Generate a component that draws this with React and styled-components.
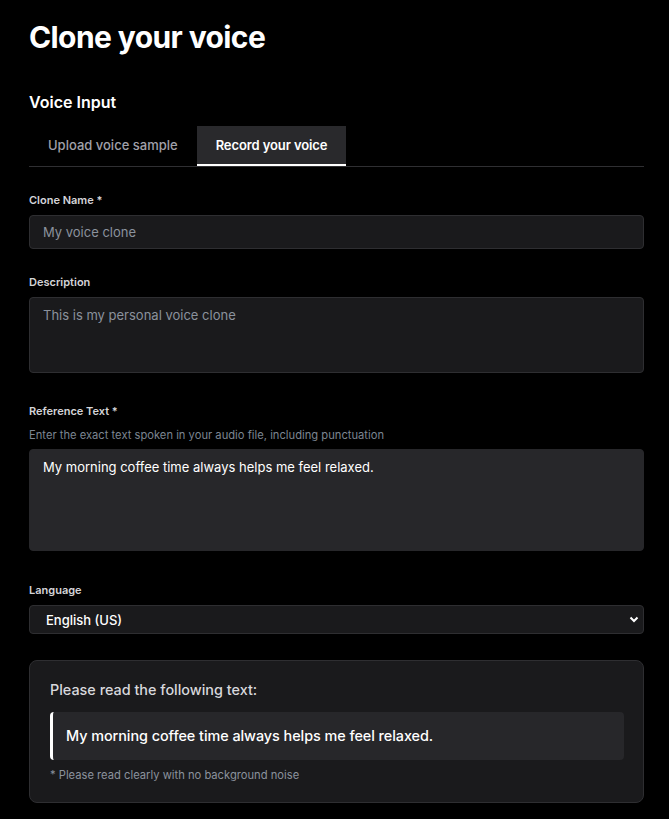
import React, { useState } from 'react';
import styled, { createGlobalStyle } from 'styled-components';

const GlobalStyle = createGlobalStyle`
    * {
        box-sizing: border-box;
    }
    body {
        margin: 0;
        background: #000;
        color: #fff;
        font-family: Inter, 'Noto Sans', 'Liberation Sans', sans-serif;
    }
`;

const Page = styled.div`
    padding: 19px 25px 16px 29px;
`;

const Title = styled.h1`
    margin: 0 0 35px;
    font-size: 30px;
    line-height: 36px;
    font-weight: 700;
    letter-spacing: -0.6px;
`;

const SectionTitle = styled.h2`
    margin: 0 0 12px;
    font-size: 16px;
    line-height: 24px;
    font-weight: 600;
`;

const TabRow = styled.div`
    display: flex;
    border-bottom: 1px solid #2f2f32;
    margin-bottom: 25px;
`;

const Tab = styled.button`
    height: 40px;
    padding: 0 19px;
    border: none;
    border-bottom: 2px solid ${({ $active }) => ($active ? '#fff' : 'transparent')};
    background: ${({ $active }) => ($active ? '#29292c' : 'transparent')};
    color: ${({ $active }) => ($active ? '#fff' : '#a1a1aa')};
    font-family: inherit;
    font-size: 13px;
    font-weight: ${({ $active }) => ($active ? 600 : 500)};
    letter-spacing: ${({ $active }) => ($active ? '-0.1px' : '0')};
    cursor: pointer;
`;

const Field = styled.div`
    display: flex;
    flex-direction: column;
    margin-bottom: ${({ $space }) => $space}px;
`;

const Label = styled.label`
    font-size: 11px;
    line-height: 16px;
    font-weight: 600;
    color: #d4d4d8;
    margin-bottom: ${({ $tight }) => ($tight ? 8 : 7)}px;
`;

const Hint = styled.div`
    font-size: 11.2px;
    line-height: 16px;
    color: #7c8591;
    margin-bottom: 6px;
`;

const TextInput = styled.input`
    height: 34px;
    padding: 0 13px;
    background: #1a1a1c;
    border: 1px solid #2e2e31;
    border-radius: 4px;
    color: #fff;
    font-family: inherit;
    font-size: 13px;
    outline: none;
    &::placeholder {
        color: #8b929c;
    }
`;

const TextArea = styled.textarea`
    display: block;
    height: ${({ $h }) => $h}px;
    padding: 8px 13px;
    background: ${({ $filled }) => ($filled ? '#27272a' : '#1a1a1c')};
    border: 1px solid ${({ $filled }) => ($filled ? '#27272a' : '#2e2e31')};
    border-radius: 4px;
    color: #fff;
    font-family: inherit;
    font-size: 13px;
    font-weight: 400;
    line-height: 18px;
    resize: none;
    outline: none;
    &::placeholder {
        color: #8b929c;
    }
`;

const SelectWrap = styled.div`
    position: relative;
`;

const Select = styled.select`
    width: 100%;
    height: 29px;
    padding: 0 16px;
    appearance: none;
    background: #1a1a1c;
    border: 1px solid #2e2e31;
    border-radius: 4px;
    color: #fff;
    font-family: inherit;
    font-size: 13px;
    font-weight: 500;
    outline: none;
`;

const Chevron = styled.svg`
    position: absolute;
    right: 5px;
    top: 10px;
    pointer-events: none;
`;

const Card = styled.div`
    background: #1a1a1c;
    border: 1px solid #2e2e31;
    border-radius: 8px;
    padding: 19px 19px 19px 20px;
`;

const CardTitle = styled.div`
    font-size: 14.4px;
    line-height: 20px;
    font-weight: 500;
    color: #d8d8dc;
    margin-bottom: 12px;
`;

const Quote = styled.div`
    background: #27272a;
    border-left: 3px solid #fff;
    border-radius: 4px;
    padding: 14px 14px 14px 13px;
    font-size: 14.4px;
    line-height: 20px;
    font-weight: 500;
    letter-spacing: -0.05px;
    color: #fff;
    margin-bottom: 7px;
`;

const Note = styled.div`
    font-size: 11.2px;
    line-height: 16px;
    color: #8b929c;
`;

const SAMPLE = 'My morning coffee time always helps me feel relaxed.';

export default function App() {
    const [tab, setTab] = useState('record');
    const [refText, setRefText] = useState(SAMPLE);

    return (
        <>
            <GlobalStyle />
            <Page>
                <Title>Clone your voice</Title>
                <SectionTitle>Voice Input</SectionTitle>
                <TabRow>
                    <Tab $active={tab === 'upload'} onClick={() => setTab('upload')}>
                        Upload voice sample
                    </Tab>
                    <Tab $active={tab === 'record'} onClick={() => setTab('record')}>
                        Record your voice
                    </Tab>
                </TabRow>

                <Field $space={25}>
                    <Label>Clone Name *</Label>
                    <TextInput placeholder="My voice clone" />
                </Field>

                <Field $space={30}>
                    <Label>Description</Label>
                    <TextArea $h={76} placeholder="This is my personal voice clone" />
                </Field>

                <Field $space={31}>
                    <Label $tight>Reference Text *</Label>
                    <Hint>Enter the exact text spoken in your audio file, including punctuation</Hint>
                    <TextArea
                        $h={102}
                        $filled
                        value={refText}
                        onChange={(e) => setRefText(e.target.value)}
                    />
                </Field>

                <Field $space={26}>
                    <Label>Language</Label>
                    <SelectWrap>
                        <Select defaultValue="en-US">
                            <option value="en-US">English (US)</option>
                            <option value="en-GB">English (UK)</option>
                        </Select>
                        <Chevron width="10" height="9" viewBox="0 0 10 9">
                            <path d="M1.5 2.5 L5 6 L8.5 2.5" fill="none" stroke="#fff" strokeWidth="2" />
                        </Chevron>
                    </SelectWrap>
                </Field>

                <Card>
                    <CardTitle>Please read the following text:</CardTitle>
                    <Quote>{refText}</Quote>
                    <Note>* Please read clearly with no background noise</Note>
                </Card>
            </Page>
        </>
    );
}
